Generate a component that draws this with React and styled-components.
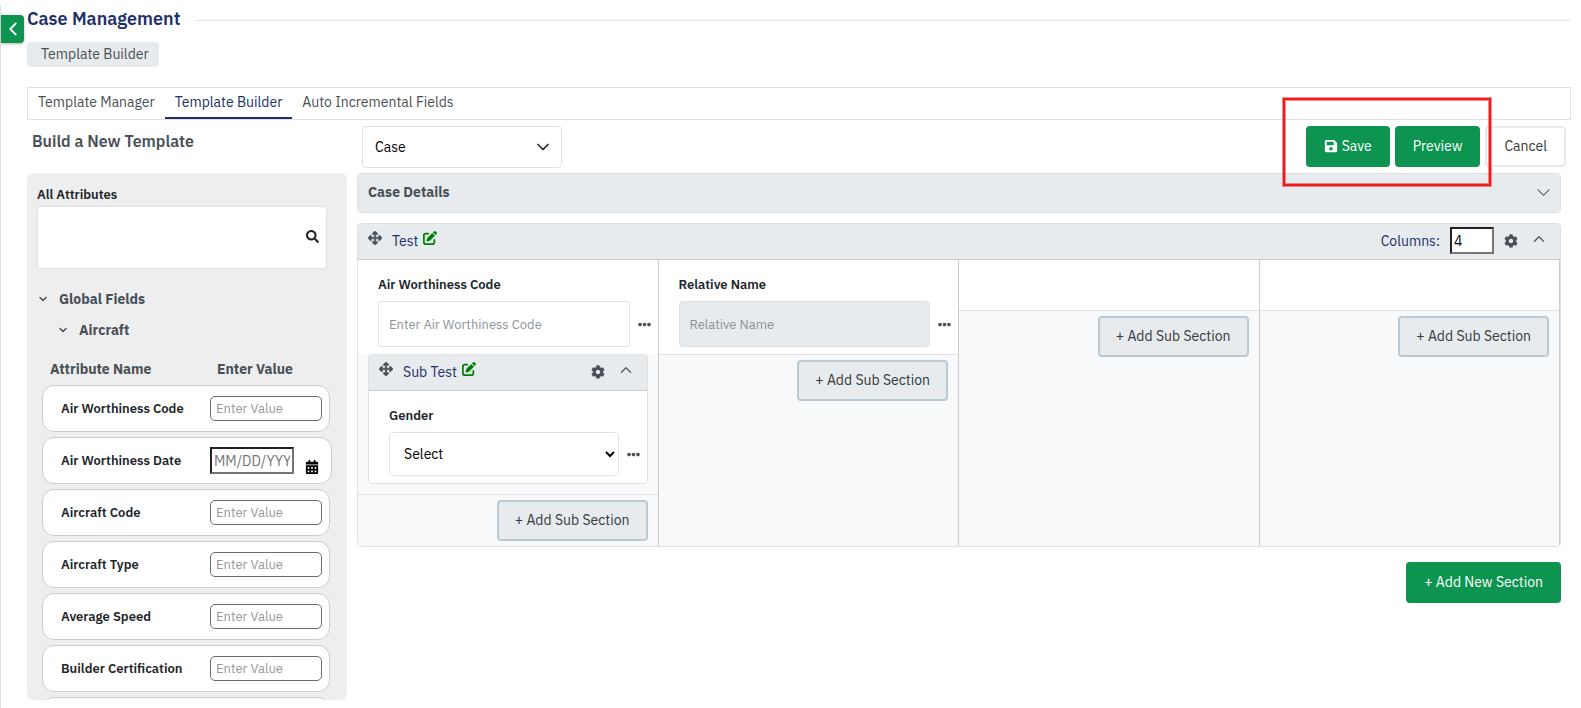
import React, { useState } from 'react';
import styled, { createGlobalStyle } from 'styled-components';
import { FaArrowsAlt, FaCalendarAlt, FaCog, FaEllipsisH, FaSave, FaSearch } from 'react-icons/fa';
import { FaPenToSquare } from 'react-icons/fa6';
import { BsChevronDown, BsChevronUp } from 'react-icons/bs';
import { FiChevronDown, FiChevronLeft } from 'react-icons/fi';

const GlobalStyle = createGlobalStyle`
  *, *::before, *::after {
    box-sizing: border-box;
  }
  body {
    margin: 0;
    background-color: #fff;
    color: #212529;
    font-family: 'IBM Plex Sans', Roboto, 'Liberation Sans', sans-serif;
    font-size: 14px;
    line-height: 20px;
  }
  button, input, select {
    font-family: inherit;
    font-size: 14px;
    line-height: 20px;
  }
`;

const Page = styled.div`
  position: relative;
  min-height: calc(100vh - 5px);
  margin-top: 5px;
  padding: 4px 10px 8px 26px;
  border-left: 1px solid #dee2e6;
`;

const Collapse = styled.button`
  position: absolute;
  left: 0;
  top: 10px;
  display: flex;
  justify-content: center;
  align-items: center;
  width: 23px;
  height: 28px;
  padding: 0;
  border: none;
  border-radius: 0 4px 4px 0;
  background-color: #0d9450;
  color: #fff;
  font-size: 22px;
  box-shadow: 0 1px 3px rgba(0, 0, 0, .3);
`;

const PageHeader = styled.header`
  display: flex;
  align-items: center;
  gap: 16px;
  height: 22px;
  &::after {
    content: '';
    flex: 1;
    height: 1px;
    background-color: #dee2e6;
  }
`;

const PageTitle = styled.h1`
  margin: 0;
  padding-bottom: 2px;
  color: #20306a;
  font-size: 18px;
  font-weight: 600;
  line-height: 22px;
`;

const Crumb = styled.span`
  display: inline-block;
  margin-top: 11px;
  padding: 2px 10px 3px 14px;
  border-radius: 4px;
  background-color: #e7ebed;
  color: #495057;
`;

const Tabs = styled.nav`
  display: flex;
  height: 33px;
  margin-top: 20px;
  border: 1px solid #dee2e6;
`;

const Tab = styled.a`
  padding: 4px 10px;
  border-bottom: 2px solid ${({ $active }) => ($active ? '#20306a' : 'transparent')};
  color: ${({ $active }) => ($active ? '#20306a' : '#495057')};
  text-decoration: none;
`;

const Toolbar = styled.div`
  display: flex;
  align-items: flex-start;
  gap: 5px;
  height: 53px;
  padding: 6px 5px 0;
`;

const ToolbarTitle = styled.h2`
  width: 325px;
  margin: 5px 0 0;
  color: #495057;
  font-size: 16px;
  font-weight: 600;
  line-height: 20px;
`;

const TypePicker = styled.div`
  position: relative;
  display: flex;
  align-items: center;
  width: 200px;
  margin-right: auto;
  svg {
    position: absolute;
    right: 9px;
    font-size: 20px;
    pointer-events: none;
  }
`;

const TypeSelect = styled.select`
  width: 100%;
  height: 42px;
  padding: 0 12px 1px;
  appearance: none;
  border: 1px solid #dee2e6;
  border-radius: 4px;
  background-color: #fff;
  color: #000;
`;

const Button = styled.button`
  display: flex;
  align-items: center;
  gap: 4px;
  height: 41px;
  padding: 0 18px 1px;
  border: none;
  border-radius: 4px;
  background-color: #0d9450;
  color: #fff;
`;

const CancelButton = styled(Button)`
  padding: 0 17px 1px;
  border: 2px solid #e7ebed;
  background-color: #fff;
  color: #343a40;
`;

const SubSectionButton = styled(Button)`
  margin: 5px 10px 5px auto;
  padding: 0 16px 1px;
  border: 2px solid #b9cad5;
  background-color: #e7ebed;
  color: #343a40;
`;

const Actions = styled.div`
  position: relative;
  display: flex;
  gap: 5px;
`;

const Highlight = styled.div`
  position: absolute;
  top: -28px;
  right: 75px;
  width: 208px;
  height: 88px;
  border: 2px solid #ec1c20;
  box-shadow: 0 0 0 1px rgba(236, 28, 32, .5), inset 0 0 0 1px rgba(236, 28, 32, .5);
  pointer-events: none;
`;

const Layout = styled.div`
  display: flex;
  align-items: flex-start;
  gap: 10px;
`;

const Sidebar = styled.aside`
  width: 320px;
  flex-shrink: 0;
  max-height: calc(100vh - 181px);
  padding: 12px 10px 0;
  overflow: hidden;
  border-radius: 6px;
  background-color: #eee;
`;

const Label = styled.label`
  display: block;
  color: #212529;
  font-size: 13px;
  font-weight: 600;
  line-height: 20px;
`;

const SearchBox = styled.div`
  position: relative;
  width: 290px;
  margin-top: 1px;
  input {
    display: block;
    width: 100%;
    height: 63px;
    padding: 0 36px 0 10px;
    border: 1px solid #dee2e6;
    border-radius: 4px;
    background-color: #fff;
  }
  svg {
    position: absolute;
    top: 24px;
    right: 8px;
    font-size: 13px;
  }
`;

const TreeItem = styled.button`
  display: flex;
  align-items: center;
  gap: 10px;
  height: 31px;
  padding: 0;
  margin-left: ${({ $level }) => $level * 20}px;
  border: none;
  background: none;
  color: #495057;
  font-weight: 700;
  svg {
    width: 12px;
    font-size: 12px;
    stroke-width: 3;
  }
`;

const Tree = styled.div`
  padding-top: 14px;
`;

const ListHead = styled.div`
  display: grid;
  grid-template-columns: 167px 1fr;
  margin: 14px 0 6px;
  padding-left: 13px;
  color: #495057;
  font-weight: 700;
`;

const Attributes = styled.div`
  display: flex;
  flex-direction: column;
  align-items: flex-start;
  gap: 5px;
  padding: 0 5px;
`;

const Attribute = styled.div`
  display: grid;
  grid-template-columns: 149px auto;
  align-items: center;
  height: 47px;
  padding: 0 ${({ $date }) => ($date ? 12 : 7)}px 0 18px;
  border: 1px solid #ccc;
  border-radius: 12px;
  background-color: #fff;
`;

const ValueInput = styled.input`
  width: 112px;
  height: 25px;
  padding: 0 5px;
  border: 1px solid #6c6c6c;
  border-radius: 5px;
  font-size: 13px;
  &::placeholder {
    color: #999;
  }
`;

const DateField = styled.div`
  display: flex;
  align-items: flex-end;
  gap: 11px;
  input {
    width: 84px;
    height: 27px;
    padding: 1px 2px;
    border: 2px inset #767676;
  }
  svg {
    font-size: 14px;
    color: #000;
  }
`;

const Main = styled.main`
  flex: 1;
  min-width: 0;
  padding-right: 10px;
`;

const Panel = styled.section`
  margin-bottom: 10px;
  border: 1px solid #dee2e6;
  border-radius: 4px;
  overflow: hidden;
`;

const DetailsHeader = styled.div`
  display: flex;
  justify-content: space-between;
  align-items: center;
  height: 38px;
  padding: 0 9px 2px 10px;
  background-color: #e7ebed;
  color: #495057;
  font-weight: 700;
  svg {
    font-size: 15px;
  }
`;

const SectionHeader = styled.div`
  display: flex;
  align-items: center;
  height: 36px;
  padding: 0 15px 2px 10px;
  border-bottom: 1px solid #ccc;
  background-color: #e7ebed;
  color: #20306a;
`;

const SectionName = styled.div`
  display: flex;
  align-items: flex-start;
  margin-right: auto;
  span {
    margin: 0 5px 0 10px;
  }
`;

const IconButton = styled.button`
  display: flex;
  padding: 0;
  border: none;
  background: none;
  color: ${({ $color }) => $color || '#495057'};
  font-size: ${({ $size }) => $size || 14}px;
`;

const ToggleButton = styled(IconButton)`
  padding-bottom: 4px;
`;

const Controls = styled.div`
  display: flex;
  align-items: center;
  gap: 15px;
`;

const ColumnsField = styled.label`
  display: flex;
  align-items: center;
  gap: 10px;
  margin-right: -5px;
  input {
    width: 44px;
    height: 27px;
    padding: 1px 2px;
    border: 2px inset #767676;
  }
`;

const Columns = styled.div`
  display: grid;
  grid-template-columns: repeat(4, 1fr);
  background-color: #f7f9fb;
`;

const Column = styled.div`
  min-height: 286px;
  border-right: 1px solid #ccc;
`;

const ColumnBody = styled.div`
  min-height: 51px;
  padding-bottom: ${({ $nested }) => ($nested ? 10 : 0)}px;
  border-bottom: 1px solid #dee2e6;
  background-color: ${({ $nested }) => ($nested ? 'transparent' : '#fff')};
`;

const Field = styled.div`
  padding: 15px 7px 7px 20px;
  background-color: #fff;
`;

const FieldRow = styled.div`
  display: flex;
  align-items: center;
  gap: 8px;
  margin-top: 6px;
`;

const TextInput = styled.input`
  flex: 1;
  min-width: 0;
  height: 46px;
  padding: 0 10px;
  border: 1px solid #dee2e6;
  border-radius: 4px;
  background-color: #fff;
  font-size: 13px;
  &:disabled {
    background-color: #e7ebed;
  }
  &::placeholder {
    color: #8e9398;
  }
`;

const FieldSelect = styled.select`
  flex: 1;
  min-width: 0;
  height: 44px;
  padding: 0 10px;
  border: 1px solid #dee2e6;
  border-radius: 4px;
  background-color: #fff;
  color: #000;
`;

const SubPanel = styled(Panel)`
  margin: 0 10px;
`;

const Footer = styled.div`
  display: flex;
  justify-content: flex-end;
  padding-top: 5px;
`;

const tabs = ['Template Manager', 'Template Builder', 'Auto Incremental Fields'];

const attributes = [
  { name: 'Air Worthiness Code' },
  { name: 'Air Worthiness Date', date: true },
  { name: 'Aircraft Code' },
  { name: 'Aircraft Type' },
  { name: 'Average Speed' },
  { name: 'Builder Certification' },
  { name: '' },
];

const AttributeItem = ({ id, name, date }) => (
  <Attribute $date={date}>
    <Label htmlFor={id}>{name}</Label>
    {date ? (
      <DateField>
        <input id={id} placeholder='MM/DD/YYYY' />
        <FaCalendarAlt />
      </DateField>
    ) : (
      <ValueInput id={id} placeholder='Enter Value' />
    )}
  </Attribute>
);

const SectionTitle = ({ children }) => (
  <SectionName>
    <IconButton><FaArrowsAlt stroke='currentColor' strokeWidth={16} /></IconButton>
    <span>{children}</span>
    <IconButton $color='#008000'><FaPenToSquare /></IconButton>
  </SectionName>
);

const TextField = ({ id, label, ...props }) => (
  <Field>
    <Label htmlFor={id}>{label}</Label>
    <FieldRow>
      <TextInput id={id} {...props} />
      <IconButton $size={13}><FaEllipsisH /></IconButton>
    </FieldRow>
  </Field>
);

const AddSubSection = () => <SubSectionButton>+ Add Sub Section</SubSectionButton>;

const App = () => {
  const [columns, setColumns] = useState('4');

  return (
    <>
      <GlobalStyle />
      <Page>
        <Collapse><FiChevronLeft /></Collapse>
        <PageHeader>
          <PageTitle>Case Management</PageTitle>
        </PageHeader>
        <Crumb>Template Builder</Crumb>
        <Tabs>
          {tabs.map((tab, i) => (
            <Tab key={tab} href='#' $active={i === 1}>{tab}</Tab>
          ))}
        </Tabs>
        <Toolbar>
          <ToolbarTitle>Build a New Template</ToolbarTitle>
          <TypePicker>
            <TypeSelect aria-label='Type'><option>Case</option></TypeSelect>
            <FiChevronDown />
          </TypePicker>
          <Actions>
            <Button><FaSave />Save</Button>
            <Button>Preview</Button>
            <CancelButton>Cancel</CancelButton>
            <Highlight />
          </Actions>
        </Toolbar>
        <Layout>
          <Sidebar>
            <Label htmlFor='search'>All Attributes</Label>
            <SearchBox>
              <input id='search' />
              <FaSearch />
            </SearchBox>
            <Tree>
              <TreeItem $level={0}><FiChevronDown />Global Fields</TreeItem>
              <TreeItem $level={1}><FiChevronDown />Aircraft</TreeItem>
            </Tree>
            <ListHead>
              <span>Attribute Name</span>
              <span>Enter Value</span>
            </ListHead>
            <Attributes>
              {attributes.map((item, i) => (
                <AttributeItem key={i} id={`attribute-${i}`} {...item} />
              ))}
            </Attributes>
          </Sidebar>
          <Main>
            <Panel>
              <DetailsHeader>
                Case Details
                <BsChevronDown />
              </DetailsHeader>
            </Panel>
            <Panel>
              <SectionHeader>
                <SectionTitle>Test</SectionTitle>
                <Controls>
                  <ColumnsField>
                    Columns:
                    <input value={columns} onChange={(e) => setColumns(e.target.value)} />
                  </ColumnsField>
                  <IconButton><FaCog /></IconButton>
                  <ToggleButton $size={12}><BsChevronUp strokeWidth={1} /></ToggleButton>
                </Controls>
              </SectionHeader>
              <Columns>
                <Column>
                  <ColumnBody $nested>
                    <TextField id='air-code' label='Air Worthiness Code' placeholder='Enter Air Worthiness Code' />
                    <SubPanel>
                      <SectionHeader>
                        <SectionTitle>Sub Test</SectionTitle>
                        <Controls>
                          <IconButton><FaCog /></IconButton>
                          <ToggleButton $size={12}><BsChevronUp strokeWidth={1} /></ToggleButton>
                        </Controls>
                      </SectionHeader>
                      <Field>
                        <Label htmlFor='gender'>Gender</Label>
                        <FieldRow>
                          <FieldSelect id='gender'><option>Select</option></FieldSelect>
                          <IconButton $size={13}><FaEllipsisH /></IconButton>
                        </FieldRow>
                      </Field>
                    </SubPanel>
                  </ColumnBody>
                  <AddSubSection />
                </Column>
                <Column>
                  <ColumnBody>
                    <TextField id='relative' label='Relative Name' placeholder='Relative Name' disabled />
                  </ColumnBody>
                  <AddSubSection />
                </Column>
                <Column>
                  <ColumnBody />
                  <AddSubSection />
                </Column>
                <Column>
                  <ColumnBody />
                  <AddSubSection />
                </Column>
              </Columns>
            </Panel>
            <Footer>
              <Button>+ Add New Section</Button>
            </Footer>
          </Main>
        </Layout>
      </Page>
    </>
  );
};

export default App;
